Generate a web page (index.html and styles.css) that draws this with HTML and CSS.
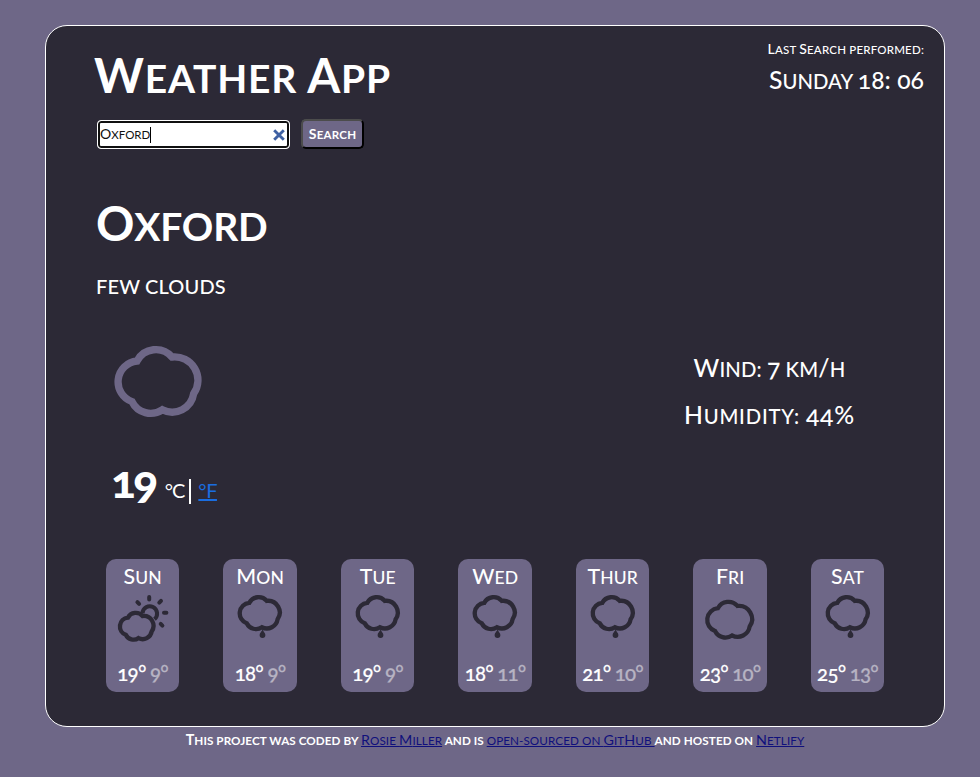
FILE: index.html
```html
<!DOCTYPE html>
<html lang="en">
<head>
<meta charset="utf-8">
<title>Weather App</title>
<link rel="stylesheet" href="styles.css">
</head>
<body>
<svg class="defs" aria-hidden="true">
  <symbol id="cloud" viewBox="70 44 270 222">
    <path d="M142 92A64 64 0 0 1 247 80A70 70 0 0 1 312 190A65 65 0 0 1 218 238A62 62 0 0 1 127 214A63 63 0 0 1 142 92Z"/>
  </symbol>
  <symbol id="rain" viewBox="0 0 56 56">
    <path transform="translate(-6.5 -2.5) scale(.167)" stroke-width="26" d="M142 92A64 64 0 0 1 247 80A70 70 0 0 1 312 190A65 65 0 0 1 218 238A62 62 0 0 1 127 214A63 63 0 0 1 142 92Z"/>
    <path class="drop" d="M30.500 39.500c.6 1.900 2.900 3.400 2.900 5.600a2.900 2.900 0 0 1-5.800 0c0-2.200 2.300-3.700 2.900-5.600z"/>
  </symbol>
  <symbol id="clouds" viewBox="0 0 56 56">
    <path transform="translate(-10.7 1) scale(.187)" stroke-width="23" d="M142 92A64 64 0 0 1 247 80A70 70 0 0 1 312 190A65 65 0 0 1 218 238A62 62 0 0 1 127 214A63 63 0 0 1 142 92Z"/>
  </symbol>
  <symbol id="sunny" viewBox="0 0 56 56">
    <path transform="translate(-7 14.8) scale(.14)" stroke-width="31" d="M142 92A64 64 0 0 1 247 80A70 70 0 0 1 312 190A65 65 0 0 1 218 238A62 62 0 0 1 127 214A63 63 0 0 1 142 92Z"/>
    <path stroke-width="4" d="M27.500 23.300A7.300 7.300 0 1 1 39.500 29.200"/>
    <path class="rays" stroke-width="4" d="M34.200 7.100v2.400M22.400 12.200l1.700 1.700M46 10.900l-1.700 1.700M49 22.700h2.400M45.700 33.900l1.700 1.700"/>
  </symbol>
</svg>

<main class="card">
  <header class="top">
    <div>
      <h1 class="title"><b>W</b>eather <b>A</b>pp</h1>
      <form class="search">
        <div class="field"><span class="query"><b>O</b>xford</span><svg class="clear" viewBox="0 0 10 10"><path d="M1 1l8 8M9 1L1 9"/></svg></div>
        <button class="submit" type="button"><b>S</b>earch</button>
      </form>
    </div>
    <div class="last">
      <div class="last-label"><b>L</b>ast <b>S</b>earch performed:</div>
      <div class="last-time"><b>S</b>unday <b class="num">18: 06</b></div>
    </div>
  </header>

  <h2 class="city"><b>O</b>xford</h2>
  <div class="summary">few clouds</div>

  <section class="now">
    <div class="reading">
      <svg class="now-icon"><use href="#cloud"/></svg>
      <div class="temp"><span class="degrees">19</span><span class="unit">°C</span><span class="bar"></span><a class="unit-link" href="#">°F</a></div>
    </div>
    <div class="facts">
      <div class="wind"><b>W</b>ind: <b class="num">7</b> km<b>/</b>h</div>
      <div class="humidity"><b>H</b>umidity: <b class="num">44%</b></div>
    </div>
  </section>

  <section class="week">
    <div class="day"><div class="name"><b>S</b>un</div><svg class="icon"><use href="#sunny"/></svg><div class="range">19° <i>9°</i></div></div>
    <div class="day"><div class="name"><b>M</b>on</div><svg class="icon"><use href="#rain"/></svg><div class="range">18° <i>9°</i></div></div>
    <div class="day"><div class="name"><b>T</b>ue</div><svg class="icon"><use href="#rain"/></svg><div class="range">19° <i>9°</i></div></div>
    <div class="day"><div class="name"><b>W</b>ed</div><svg class="icon"><use href="#rain"/></svg><div class="range">18° <i>11°</i></div></div>
    <div class="day"><div class="name"><b>T</b>hur</div><svg class="icon"><use href="#rain"/></svg><div class="range">21° <i>10°</i></div></div>
    <div class="day"><div class="name"><b>F</b>ri</div><svg class="icon"><use href="#clouds"/></svg><div class="range">23° <i>10°</i></div></div>
    <div class="day"><div class="name"><b>S</b>at</div><svg class="icon"><use href="#rain"/></svg><div class="range">25° <i>13°</i></div></div>
  </section>
</main>
<footer class="credits"><b>T</b>his project was coded by <a href="#"><b>R</b>osie <b>M</b>iller</a> and is <a href="#">open-sourced on <b>G</b>it<b>H</b>ub </a>and hosted on <a href="#"><b>N</b>etlify</a></footer>
</body>
</html>
```
FILE: styles.css
```css
* { box-sizing: border-box; }
body {
  margin: 0;
  height: 777px;
  padding-top: 25px;
  overflow: hidden;
  background: #6e6787;
  color: #fff;
  font-family: Lato, "Open Sans", sans-serif;
  font-weight: 500;
  font-variant-numeric: oldstyle-nums;
  text-transform: uppercase;
  white-space: nowrap;
}
/* Capitals are 1.22x the small-cap size set on each text block. */
b { font-size: 1.22em; font-weight: inherit; line-height: 0; }
.defs { position: absolute; width: 0; height: 0; }
svg path { fill: none; stroke: currentColor; }
.card {
  width: 900px;
  height: 702px;
  margin-left: 45px;
  padding: 20px 20px 0 50px;
  border: 1px solid #fff;
  border-radius: 22px;
  background: #2c2936;
}
.top { display: flex; justify-content: space-between; height: 148px; }
.title, .city { margin: 0; height: 58px; font-size: 39px; font-weight: 700; line-height: 65px; }
.title { margin-left: -2px; letter-spacing: .750px; }
.city { letter-spacing: -.200px; }
.search { display: flex; align-items: flex-start; margin: 15px 0 0; }
.title + .search { margin-top: 15px; }
.field {
  display: flex;
  align-items: center;
  justify-content: space-between;
  width: 193px;
  height: 29px;
  margin: 1px 11px 0 1px;
  padding: 0 3px 0 1px;
  border: 1px solid #fff;
  border-radius: 4px;
  background: #fff;
  box-shadow: inset 0 0 0 2px #101010;
  color: #111;
  font-weight: 400;
}
.query { margin-left: 1px; border-right: 1px solid #000; font-size: 11.500px; line-height: 16px; }
.clear { width: 12px; height: 12px; margin-right: 1px; color: #3f61a3; }
.clear path { stroke-width: 2.400; }
.submit {
  width: 63px;
  height: 30px;
  padding: 0;
  border: 2px outset #000;
  border-color: #4c4c4c #000 #000 #4c4c4c;
  border-radius: 5px;
  background: #6e6787;
  color: #fff;
  font: 700 11.500px Lato, sans-serif;
  letter-spacing: .250px;
  text-transform: uppercase;
}
.last { text-align: right; }
.last-label { height: 20px; margin-top: -7px; font-size: 11.500px; line-height: 21px; letter-spacing: .200px; }
.last-time { height: 32px; margin-top: 6px; font-size: 20.300px; line-height: 32px; letter-spacing: .050px; }
.summary { height: 24px; margin-top: 22px; font-size: 20px; line-height: 24px; letter-spacing: .150px; }
.now { display: flex; justify-content: space-between; height: 261px; padding-right: 69px; }
.reading { padding: 47px 0 0 17px; }
.now-icon { display: block; width: 90px; height: 74px; color: #6e6787; stroke-width: 22; }
.temp { display: flex; align-items: baseline; height: 56px; margin: 34px 0 0 -2px; }
.degrees { font-size: 46px; font-weight: 900; line-height: 56px; letter-spacing: -2.500px; }
.unit { margin-left: 9px; font-size: 20px; font-weight: 400; letter-spacing: -1px; }
.bar { align-self: flex-start; width: 2px; height: 25px; margin: 26px 0 0 5px; background: #fff; }
.unit-link { margin-left: 7px; color: #1a6de0; font-size: 20px; font-weight: 400; letter-spacing: -.500px; }
.facts { display: flex; flex-direction: column; align-items: center; padding-top: 48px; font-size: 20.300px; line-height: 47px; }
.wind { letter-spacing: .100px; }
.humidity { letter-spacing: .800px; }
.week { display: flex; gap: 44.200px; margin-left: 10px; }
.day {
  display: flex;
  flex: 0 0 73.300px;
  flex-direction: column;
  align-items: center;
  height: 133px;
  border-radius: 10px;
  background: #6e6787;
}
.name { height: 31px; font-size: 17.500px; line-height: 37px; letter-spacing: .100px; }
.icon { width: 56px; height: 56px; color: #2c2936; }
.drop { fill: currentColor; stroke: none; }
.rays { stroke-linecap: round; }
.range { margin-top: 12px; font-size: 20.500px; line-height: 30px; letter-spacing: -.800px; -webkit-text-stroke: .15px; }
.range i { font-style: normal; opacity: .5; }
.credits { width: 900px; margin: 3px 0 0 45px; text-align: center; font-size: 11.700px; font-weight: 700; line-height: 21px; letter-spacing: .070px; }
.credits a { color: #10107c; font-weight: 400; }
```
